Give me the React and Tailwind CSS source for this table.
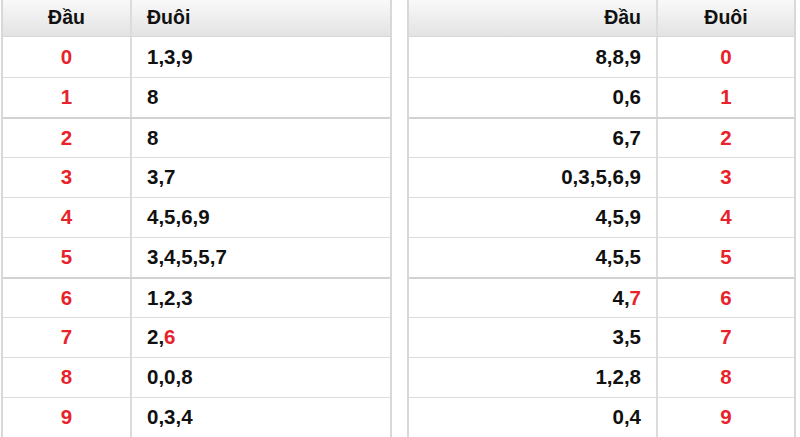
const left = [
  ["1,3,9"],
  ["8"],
  ["8"],
  ["3,7"],
  ["4,5,6,9"],
  ["3,4,5,5,7"],
  ["1,2,3"],
  ["2,", "6"],
  ["0,0,8"],
  ["0,3,4"],
];

const right = [
  ["8,8,9"],
  ["0,6"],
  ["6,7"],
  ["0,3,5,6,9"],
  ["4,5,9"],
  ["4,5,5"],
  ["4,", "7"],
  ["3,5"],
  ["1,2,8"],
  ["0,4"],
];

// rows 2 and 6 get the heavier divider line
const thick = (i) => i === 2 || i === 6;

function Nums({ parts }) {
  return (
    <>
      <span>{parts[0]}</span>
      {parts[1] && <span className="text-[#e8222b]">{parts[1]}</span>}
    </>
  );
}

function Header({ cols, children }) {
  return (
    <div
      className={`grid ${cols} h-[37px] bg-gradient-to-b from-[#f9f9f9] to-[#e3e3e3] border-b border-[#d6d6d6] text-[19.5px] font-bold text-[#111]`}
    >
      {children}
    </div>
  );
}

export default function App() {
  return (
    <div
      className="w-[800px] h-[437px] overflow-hidden bg-white flex gap-[15px] pl-[1px]"
      style={{ fontFamily: '"Liberation Sans", Arial, sans-serif' }}
    >
      {/* Left table: Đầu -> Đuôi */}
      <div className="w-[391px] border-x-2 border-[#d8d8d8]">
        <Header cols="grid-cols-[129px_1fr]">
          <div className="flex items-center justify-center border-r-2 border-[#dcdcdc]">Đầu</div>
          <div className="flex items-center pl-[15px]">Đuôi</div>
        </Header>
        {left.map((row, i) => (
          <div
            key={i}
            className={`grid grid-cols-[129px_1fr] h-[40px] text-[20.5px] font-bold ${
              i === 0 ? "" : thick(i) ? "border-t-2 border-[#d2d2d2]" : "border-t border-[#dcdcdc]"
            }`}
          >
            <div className="flex items-center justify-center border-r-2 border-[#dcdcdc] text-[#e8222b]">{i}</div>
            <div className="flex items-center pl-[15px] text-[#111]">
              <Nums parts={row} />
            </div>
          </div>
        ))}
      </div>

      {/* Right table: Đầu <- Đuôi */}
      <div className="w-[389px] border-x-2 border-[#d8d8d8]">
        <Header cols="grid-cols-[249px_1fr]">
          <div className="flex items-center justify-end pr-[15px] border-r-2 border-[#dcdcdc]">Đầu</div>
          <div className="flex items-center justify-center">Đuôi</div>
        </Header>
        {right.map((row, i) => (
          <div
            key={i}
            className={`grid grid-cols-[249px_1fr] h-[40px] text-[20.5px] font-bold ${
              i === 0 ? "" : thick(i) ? "border-t-2 border-[#d2d2d2]" : "border-t border-[#dcdcdc]"
            }`}
          >
            <div className="flex items-center justify-end pr-[15px] border-r-2 border-[#dcdcdc] text-[#111]">
              <Nums parts={row} />
            </div>
            <div className="flex items-center justify-center text-[#e8222b]">{i}</div>
          </div>
        ))}
      </div>
    </div>
  );
}
